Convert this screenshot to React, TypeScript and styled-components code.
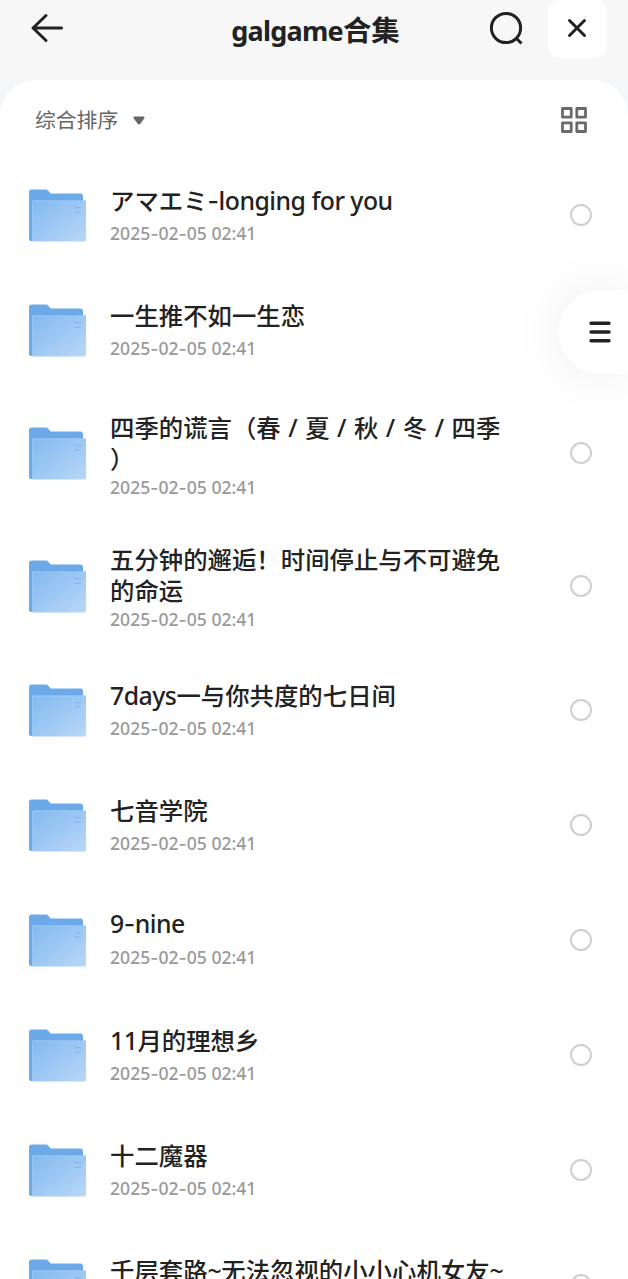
import React from "react";
import styled, { createGlobalStyle } from "styled-components";

const GlobalStyle = createGlobalStyle`
  * { box-sizing: border-box; }
  html, body { margin: 0; height: 100%; overflow: hidden; background: #f7f7f8; }
  body { font-family: "Noto Sans", "Noto Sans CJK SC", sans-serif; color: #222; }
  button { border: 0; padding: 0; background: none; font: inherit; color: inherit; display: block; }
  svg { display: block; }
`;

const Screen = styled.div`
  width: 628px;
  height: 1279px;
  overflow: hidden;
  position: relative;
  background: linear-gradient(#f7f7f7 80px, #f5f6f9 80px);
`;

const Header = styled.header`
  height: 80px;
  display: grid;
  grid-template-columns: 150px 1fr 150px;
  align-items: start;
`;

const BackButton = styled.button`
  margin: 12px 0 0 30px;
  width: 34px;
`;

const Title = styled.h1`
  margin: 10px 0 0 3px;
  text-align: center;
  font-size: 28.4px;
  line-height: 40px;
  font-weight: 700;
  white-space: nowrap;
`;

const TitleLatin = styled.span`
  font-size: 27px;
  font-weight: 700;
  letter-spacing: -0.75px;
`;

const HeaderActions = styled.div`
  display: flex;
  align-items: flex-start;
  justify-content: flex-end;
  padding-right: 21px;
  gap: 24px;
`;

const SearchButton = styled.button`
  margin-top: 10px;
`;

const CloseButton = styled.button`
  width: 59px;
  height: 59px;
  margin-top: -1px;
  padding: 0 1px 2px 0;
  border-radius: 13px;
  background: #fff;
  display: grid;
  place-items: center;
`;

const Sheet = styled.main`
  background: #fff;
  border-radius: 36px 36px 0 0;
`;

const Toolbar = styled.div`
  height: 77px;
  padding: 0 41px 0 35px;
  display: flex;
  align-items: center;
  justify-content: space-between;
`;

const SortButton = styled.button`
  display: flex;
  align-items: center;
  gap: 15px;
  font-size: 20.8px;
  line-height: 30px;
  color: #666;
  margin-top: 3px;
`;

const GridButton = styled.button`
  margin-top: 3px;
`;

const List = styled.ul`
  margin: 0;
  padding: 0;
  list-style: none;
`;

const Row = styled.li<{ $tall: boolean }>`
  height: ${(p) => (p.$tall ? 132.5 : 115)}px;
  padding: 0 36px 0 28px;
  display: grid;
  grid-template-columns: 60px 1fr 22px;
  column-gap: 22px;
  align-items: center;
`;

const Details = styled.div<{ $tall: boolean; $latin: boolean }>`
  display: flex;
  flex-direction: column;
  gap: ${(p) => (p.$tall ? 3 : p.$latin ? 8 : 7)}px;
  padding-top: ${(p) => (p.$tall ? 1.5 : 0)}px;
  padding-bottom: ${(p) => (p.$tall ? 0 : p.$latin ? 4 : 2)}px;
`;

const Name = styled.div`
  font-size: 24.4px;
  line-height: 31px;
  font-weight: 500;
  white-space: nowrap;
`;

const Latin = styled.span`
  font-size: 24.8px;
  letter-spacing: -0.5px;
`;

const Hyphen = styled.span`
  font-family: Inter, sans-serif;
  line-height: 1;
`;

const Slash = styled.span`
  display: inline-block;
  width: 24.4px;
  text-align: center;
`;

const Time = styled.time`
  font-size: 17.6px;
  line-height: 20px;
  font-weight: 500;
  color: #999;
  white-space: nowrap;
`;

const Check = styled.span`
  width: 22px;
  height: 22px;
  border: 2px solid #cfcfd3;
  border-radius: 50%;
`;

const MenuHandle = styled.button`
  position: absolute;
  right: 0;
  top: 290px;
  width: 70px;
  height: 84px;
  padding-left: 31px;
  display: flex;
  align-items: center;
  background: #fff;
  border-radius: 42px 0 0 42px;
  box-shadow: 0 0 52px rgba(0, 0, 0, 0.075);
`;

const FolderSvg = styled.svg`
  margin-top: 2px;
`;

const FolderIcon = () => (
  <FolderSvg width="60" height="56" viewBox="0 0 60 56">
    <defs>
      <linearGradient id="front" x1="0" y1="0" x2="1" y2="1">
        <stop offset="0" stopColor="#83b9ee" />
        <stop offset="0.5" stopColor="#9dc8f4" />
        <stop offset="1" stopColor="#b9d7f7" />
      </linearGradient>
    </defs>
    <path d="M1 4a2.500 2.500 0 0 1 2.500-2.500h14.700a2.500 2.500 0 0 1 1.900.9l2.600 3.200h29.800A2.500 2.500 0 0 1 55 8v45H3a2 2 0 0 1-2-2z" fill="#6ca9e8" />
    <path d="M4.500 12.500H57a1 1 0 0 1 1 1V52a1.500 1.500 0 0 1-1.500 1.500H4.500z" fill="url(#front)" />
    <path d="M4.700 53V13h53" fill="none" stroke="#a3cdf5" strokeWidth="0.8" />
    <path d="M47 19.700h6M47 24.200h6" stroke="#83b2e8" strokeWidth="1" />
  </FolderSvg>
);

type Item = { lines: React.ReactNode[]; latin?: boolean };

const items: Item[] = [
  { lines: [<>アマエミ<Latin><Hyphen>-</Hyphen>longing for you</Latin></>] },
  { lines: ["一生推不如一生恋"] },
  {
    lines: [
      <>四季的谎言（春<Slash>/</Slash>夏<Slash>/</Slash>秋<Slash>/</Slash>冬<Slash>/</Slash>四季</>,
      "）",
    ],
  },
  { lines: ["五分钟的邂逅！时间停止与不可避免", "的命运"] },
  { lines: [<><Latin>7days</Latin>一与你共度的七日间</>] },
  { lines: ["七音学院"] },
  { lines: [<Latin>9<Hyphen>-</Hyphen>nine</Latin>], latin: true },
  { lines: [<><Latin>11</Latin>月的理想乡</>] },
  { lines: ["十二魔器"] },
  { lines: [<>千层套路<Latin>~</Latin>无法忽视的小小心机女友<Latin>~</Latin></>] },
];

export default function App() {
  return (
    <Screen>
      <GlobalStyle />
      <Header>
        <BackButton aria-label="返回">
          <svg width="34" height="32" viewBox="0 0 34 32" fill="none" stroke="#222" strokeWidth="3" strokeLinecap="round" strokeLinejoin="round">
            <path d="M16 3.500 3 16l13 12.500M3 16h28.500" />
          </svg>
        </BackButton>
        <Title><TitleLatin>galgame</TitleLatin>合集</Title>
        <HeaderActions>
          <SearchButton aria-label="搜索">
            <svg width="36" height="36" viewBox="0 0 36 36" fill="none" stroke="#222" strokeWidth="3">
              <circle cx="18" cy="18" r="14.600" />
              <path d="m28 28 5.500 5.500" />
            </svg>
          </SearchButton>
          <CloseButton aria-label="关闭">
            <svg width="20" height="20" viewBox="0 0 20 20" stroke="#222" strokeWidth="3" strokeLinecap="round">
              <path d="m2.500 2.500 15 15m0-15-15 15" />
            </svg>
          </CloseButton>
        </HeaderActions>
      </Header>
      <Sheet>
        <Toolbar>
          <SortButton>
            综合排序
            <svg width="12" height="9" viewBox="0 0 12 9">
              <path d="M1.600.5h8.800c1 0 1.500 1.200.8 2L7.300 7.700a1.800 1.800 0 0 1-2.600 0L.8 2.500C.1 1.700.6.5 1.600.5z" fill="#666" />
            </svg>
          </SortButton>
          <GridButton aria-label="网格">
            <svg width="26" height="26" viewBox="0 0 26 26" fill="none" stroke="#6a6a6a" strokeWidth="2.800" strokeLinejoin="round">
              <rect x="1.500" y="1.500" width="8.700" height="8.700" />
              <rect x="15.800" y="1.500" width="8.700" height="8.700" />
              <rect x="1.500" y="15.800" width="8.700" height="8.700" />
              <rect x="15.800" y="15.800" width="8.700" height="8.700" />
            </svg>
          </GridButton>
        </Toolbar>
        <List>
          {items.map((item, i) => {
            const tall = item.lines.length > 1;
            return (
              <Row key={i} $tall={tall}>
                <FolderIcon />
                <Details $tall={tall} $latin={!!item.latin}>
                  <div>
                    {item.lines.map((line, j) => (
                      <Name key={j}>{line}</Name>
                    ))}
                  </div>
                  <Time>2025<Hyphen>-</Hyphen>02<Hyphen>-</Hyphen>05 02:41</Time>
                </Details>
                <Check />
              </Row>
            );
          })}
        </List>
      </Sheet>
      <MenuHandle aria-label="菜单">
        <svg width="22" height="24" viewBox="0 0 22 24" stroke="#222" strokeWidth="3.400" strokeLinecap="round">
          <path d="M2 3.200h18M2 12h18M2 20.800h18" />
        </svg>
      </MenuHandle>
    </Screen>
  );
}
